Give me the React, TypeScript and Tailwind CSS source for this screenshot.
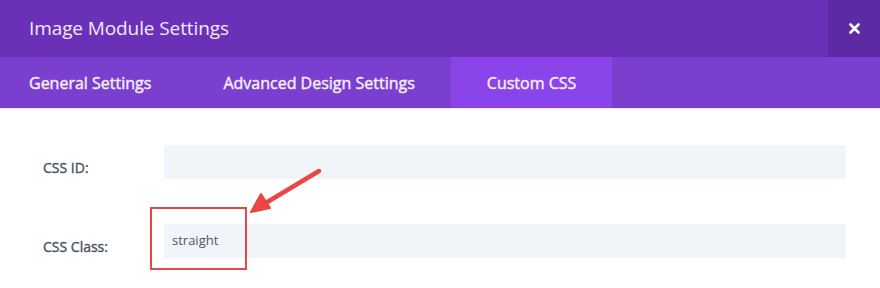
export default function App() {
  return (
    <div className="w-[880px] h-[288px] bg-white overflow-hidden font-['Open_Sans',sans-serif]">
      {/* Header */}
      <div className="flex h-[57px] bg-[#6b30b8]">
        <div className="flex-1 flex items-center pl-[29px] text-[19px] text-[#f1eafb] tracking-[-0.1px]">
          Image Module Settings
        </div>
        <button className="w-[52px] flex items-center justify-center bg-[#5d2aa6] text-white">
          <svg width="11" height="11" viewBox="0 0 11 11">
            <path d="M1.5 1.5 L9.5 9.5 M9.5 1.5 L1.5 9.5" stroke="#fff" strokeWidth="2.6" strokeLinecap="round" />
          </svg>
        </button>
      </div>

      {/* Tabs */}
      <div className="flex h-[52px] bg-[#7b3fcf] border-b border-[#eceef2] text-[16px] text-[#f6f0fd] [-webkit-text-stroke:0.4px_#f6f0fd]">
        <div className="flex items-center pl-[29px] pr-[36px] pt-[1px]">General Settings</div>
        <div className="flex items-center px-[36px] pt-[1px]">Advanced Design Settings</div>
        <div className="flex items-center px-[36px] pt-[1px] bg-[#8b44e9]">Custom CSS</div>
      </div>

      {/* Body */}
      <div className="flex flex-col gap-[45px] pt-[36px] pr-[34px]">
        <div className="flex items-center">
          <div className="w-[164px] pl-[43px] pt-[10px] text-[14px] text-[#4a5563] [-webkit-text-stroke:0.4px_#4a5563]">CSS ID:</div>
          <div className="flex-1 h-[34px] bg-[#f1f5f9]" />
        </div>
        <div className="flex items-center">
          <div className="w-[164px] pl-[43px] pt-[10px] text-[14px] text-[#4a5563] [-webkit-text-stroke:0.4px_#4a5563]">CSS Class:</div>
          <div className="relative flex-1 h-[34px] bg-[#f1f5f9] flex items-center pl-[8px] text-[13px] text-[#4d5866]">
            straight
            <div className="absolute left-[-14px] top-[-17px] w-[97px] h-[63px] border-2 border-[#e24a47]" />
            <svg
              className="absolute left-[84px] top-[-58px]"
              width="76"
              height="50"
              viewBox="0 0 76 50"
            >
              <path d="M71 5 L16 38" stroke="#ea4643" strokeWidth="4.5" strokeLinecap="round" />
              <path d="M3 46 L13 28 L22 42 Z" fill="#ea4643" stroke="#ea4643" strokeWidth="2" strokeLinejoin="round" />
            </svg>
          </div>
        </div>
      </div>
    </div>
  );
}
